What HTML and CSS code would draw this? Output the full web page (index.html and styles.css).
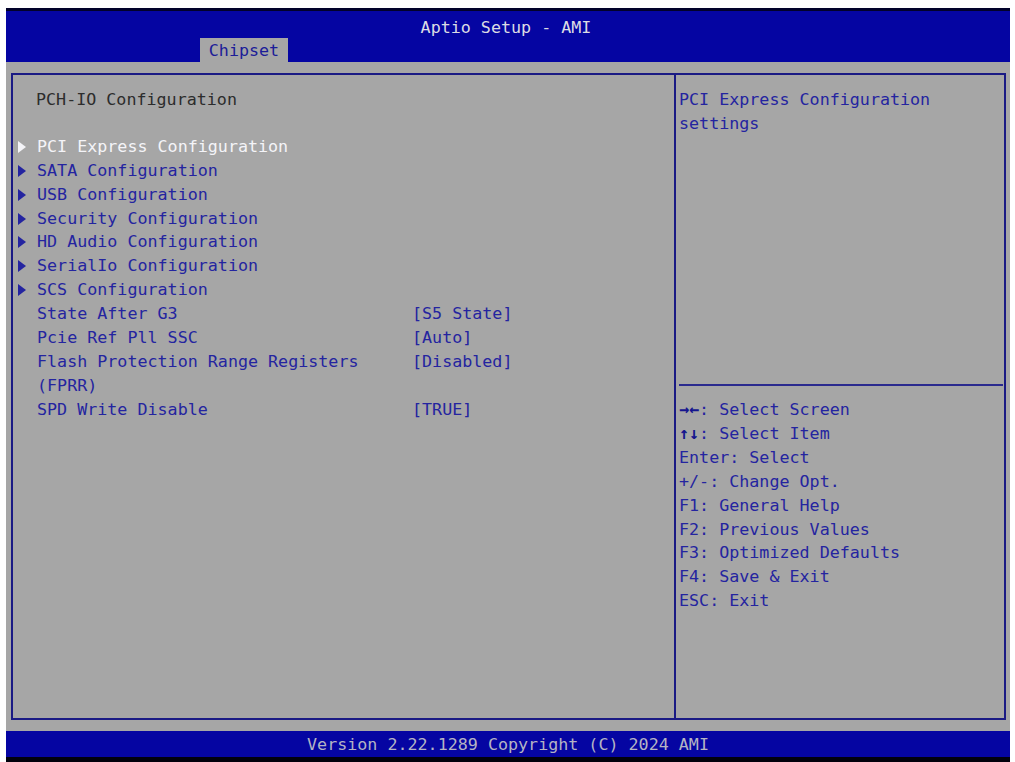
FILE: index.html
```html
<!DOCTYPE html>
<html lang="en">
    <head>
        <meta charset="UTF-8">
        <meta name="viewport" content="width=device-width, initial-scale=1.0">
        <title>Aptio Setup - AMI</title>
        <link rel="stylesheet" href="styles.css">
    </head>
    <body>
        <div class="screen">
            <div class="topbar">
                <div class="title">Aptio Setup - AMI</div>
                <div class="tabs">
                    <span class="tab">Chipset</span>
                </div>
            </div>
            <div class="main">
                <div class="frame">
                    <div class="items">
                        <div class="heading">PCH-IO Configuration</div>
                        <div class="blank"></div>
                        <div class="row selected"><span class="arrow"></span><span class="label">PCI Express Configuration</span></div>
                        <div class="row"><span class="arrow"></span><span class="label">SATA Configuration</span></div>
                        <div class="row"><span class="arrow"></span><span class="label">USB Configuration</span></div>
                        <div class="row"><span class="arrow"></span><span class="label">Security Configuration</span></div>
                        <div class="row"><span class="arrow"></span><span class="label">HD Audio Configuration</span></div>
                        <div class="row"><span class="arrow"></span><span class="label">SerialIo Configuration</span></div>
                        <div class="row"><span class="arrow"></span><span class="label">SCS Configuration</span></div>
                        <div class="row"><span class="noarrow"></span><span class="label">State After G3</span><span class="value">[S5 State]</span></div>
                        <div class="row"><span class="noarrow"></span><span class="label">Pcie Ref Pll SSC</span><span class="value">[Auto]</span></div>
                        <div class="row"><span class="noarrow"></span><span class="label">Flash Protection Range Registers (FPRR)</span><span class="value">[Disabled]</span></div>
                        <div class="row"><span class="noarrow"></span><span class="label">SPD Write Disable</span><span class="value">[TRUE]</span></div>
                    </div>
                    <div class="help">
                        <div class="help-text">PCI Express Configuration settings</div>
                        <div class="help-line"></div>
                        <div class="keys">
                            <div><span class="glyph">&rarr;&larr;</span>: Select Screen</div>
                            <div><span class="glyph">&uarr;&darr;</span>: Select Item</div>
                            <div>Enter: Select</div>
                            <div>+/-: Change Opt.</div>
                            <div>F1: General Help</div>
                            <div>F2: Previous Values</div>
                            <div>F3: Optimized Defaults</div>
                            <div>F4: Save &amp; Exit</div>
                            <div>ESC: Exit</div>
                        </div>
                    </div>
                </div>
            </div>
            <div class="footer">Version 2.22.1289 Copyright (C) 2024 AMI</div>
        </div>
    </body>
</html>
```
FILE: styles.css
```css
*{
    margin: 0;
    padding: 0;
    box-sizing: border-box;
}
body {
    background: #fff;
    font-family: "DejaVu Sans Mono", "Liberation Mono", monospace;
    font-size: 16.7px;
    line-height: 23.9px;
}
.screen {
    width: 1004px;
    height: 754px;
    margin: 8px 0 0 6px;
    background: #a6a6a6;
    display: flex;
    flex-direction: column;
}
.topbar {
    height: 54px;
    background: #0505a2;
    border-top: 3px solid #02022a;
    padding-top: 5px;
}
.title {
    text-align: center;
    color: #dcdce4;
    line-height: 22px;
    height: 22px;
    padding-right: 4px;
}
.tabs {
    padding-left: 194px;
}
.tab {
    display: inline-block;
    width: 88px;
    height: 24px;
    line-height: 24px;
    text-align: center;
    background: #a6a6a6;
    color: #1c1c98;
}
.main {
    height: 669px;
    padding: 11px 4px 11px 5px;
}
.frame {
    height: 647px;
    border: 2px solid #1a1a84;
    display: flex;
}
.items {
    width: 663px;
    border-right: 2px solid #1a1a84;
    padding: 13px 0 0 4px;
    color: #2424a0;
}
.heading {
    padding-left: 19px;
    color: #2c2c2c;
}
.blank {
    height: 22.9px;
}
.row {
    display: flex;
    align-items: flex-start;
}
.arrow, .noarrow {
    width: 20px;
    height: 23.9px;
    flex-shrink: 0;
    position: relative;
}
.arrow::before {
    content: "";
    position: absolute;
    left: 1px;
    top: 6px;
    border-left: 8px solid #2424a0;
    border-top: 6px solid transparent;
    border-bottom: 6px solid transparent;
}
.selected {
    color: #f4f4f8;
}
.selected .arrow::before {
    border-left-color: #f4f4f8;
}
.label {
    width: 375px;
    flex-shrink: 0;
}
.help {
    flex: 1;
    display: flex;
    flex-direction: column;
    color: #2424a0;
}
.help-text {
    height: 309px;
    padding: 13px 40px 0 3px;
}
.help-line {
    height: 2px;
    margin: 0 1px 0 3px;
    background: #2a2a8e;
}
.keys {
    padding: 12px 0 0 3px;
}
.glyph {
    font-weight: bold;
    color: #14148e;
}
.footer {
    height: 31px;
    line-height: 26px;
    background: #0505a2;
    border-bottom: 5px solid #01010c;
    color: #b4b4c4;
    text-align: center;
}
```
